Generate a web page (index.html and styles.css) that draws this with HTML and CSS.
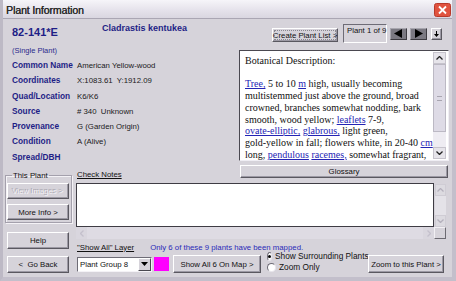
FILE: index.html
```html
<!DOCTYPE html>
<html>
<head>
    <title>Plant Information</title>
    <link rel="stylesheet" href="styles.css">
</head>
<body>
    <div class="window">
        <div class="titlebar">
            <span class="title">Plant Information</span>
            <div class="close">
                <svg width="17" height="14" viewBox="0 0 17 14">
                    <rect x="0.5" y="0.5" width="16" height="13" rx="2" fill="#e0533f" stroke="#b8392a"/>
                    <path d="M5 3.5 L12 10.5 M12 3.5 L5 10.5" stroke="#fff" stroke-width="1.8"/>
                </svg>
            </div>
        </div>

        <div class="client">
            <div class="top">
                <div class="info">
                    <div class="ident">
                        <div class="plant-id">82-141*E</div>
                        <div class="species">Cladrastis kentukea</div>
                    </div>
                    <div class="single">(Single Plant)</div>
                    <div class="fields">
                        <div class="field"><span class="label">Common Name</span><span class="value">American Yellow-wood</span></div>
                        <div class="field"><span class="label">Coordinates</span><span class="value">X:1083.61&nbsp; Y:1912.09</span></div>
                        <div class="field"><span class="label">Quad/Location</span><span class="value">K6/K6</span></div>
                        <div class="field"><span class="label">Source</span><span class="value"># 340&nbsp; Unknown</span></div>
                        <div class="field"><span class="label">Provenance</span><span class="value">G (Garden Origin)</span></div>
                        <div class="field"><span class="label">Condition</span><span class="value">A (Alive)</span></div>
                        <div class="field"><span class="label">Spread/DBH</span><span class="value"></span></div>
                    </div>
                </div>

                <div class="side">
                    <div class="navrow">
                        <div class="btn create-btn">Create Plant List &gt;</div>
                        <div class="counter">Plant 1 of 9</div>
                        <div class="arrow-btn">
                            <svg width="9" height="9" viewBox="0 0 9 9"><path d="M8 0 L0 4.5 L8 9 Z" fill="#000"/></svg>
                        </div>
                        <div class="arrow-btn">
                            <svg width="9" height="9" viewBox="0 0 9 9"><path d="M1 0 L9 4.5 L1 9 Z" fill="#000"/></svg>
                        </div>
                        <div class="btn down-btn">
                            <svg width="5" height="6" viewBox="0 0 5 6"><path d="M2 0 H3 V3 H5 L2.5 6 L0 3 H2 Z" fill="#000"/></svg>
                        </div>
                    </div>
                    <div class="desc">
                        <div class="desc-text">
                            Botanical Description:<br>
                            <br>
                            <a>Tree,</a> 5 to 10 <a>m</a> high, usually becoming<br>
                            multistemmed just above the ground, broad<br>
                            crowned, branches somewhat nodding, bark<br>
                            smooth, wood yellow; <a>leaflets</a> 7-9,<br>
                            <a>ovate-elliptic,</a> <a>glabrous,</a> light green,<br>
                            gold-yellow in fall; flowers white, in 20-40 <a>cm</a><br>
                            long, <a>pendulous</a> <a>racemes,</a> somewhat fragrant,
                        </div>
                        <div class="vscroll">
                            <div class="sb-btn"><svg width="7" height="4" viewBox="0 0 7 4"><path d="M0.5 3.5 L3.5 0.5 L6.5 3.5" fill="none" stroke="#222" stroke-width="1.3"/></svg></div>
                            <div class="sb-thumb"><span class="grip"></span></div>
                            <div class="sb-track"></div>
                            <div class="sb-btn"><svg width="7" height="4" viewBox="0 0 7 4"><path d="M0.5 0.5 L3.5 3.5 L6.5 0.5" fill="none" stroke="#222" stroke-width="1.3"/></svg></div>
                        </div>
                    </div>
                </div>
            </div>

            <div class="bottom">
                <div class="actions">
                    <fieldset class="group">
                        <legend>This Plant</legend>
                        <div class="btn side-btn disabled">View Images &gt;</div>
                        <div class="btn side-btn">More Info &gt;</div>
                    </fieldset>
                    <div class="btn side-btn help-btn">Help</div>
                    <div class="btn side-btn back-btn">&lt;&nbsp; Go Back</div>
                </div>

                <div class="notes">
                    <div class="notes-head">
                        <span class="link-label">Check Notes</span>
                        <div class="btn glossary-btn">Glossary</div>
                    </div>
                    <div class="notes-box">
                        <div class="notes-main">
                            <div class="notes-text"></div>
                            <div class="vscroll flat">
                                <div class="sb-btn dim"><svg width="7" height="4" viewBox="0 0 7 4"><path d="M0.5 3.5 L3.5 0.5 L6.5 3.5" fill="none" stroke="#b4b0bc" stroke-width="1.3"/></svg></div>
                                <div class="sb-track"></div>
                                <div class="sb-btn dim"><svg width="7" height="4" viewBox="0 0 7 4"><path d="M0.5 0.5 L3.5 3.5 L6.5 0.5" fill="none" stroke="#b4b0bc" stroke-width="1.3"/></svg></div>
                            </div>
                        </div>
                        <div class="hscroll">
                            <div class="hs-btn"><svg width="4" height="7" viewBox="0 0 4 7"><path d="M3.5 0.5 L0.5 3.5 L3.5 6.5" fill="none" stroke="#c4c0cc" stroke-width="1.3"/></svg></div>
                            <div class="hs-track"></div>
                            <div class="hs-btn"><svg width="4" height="7" viewBox="0 0 4 7"><path d="M0.5 0.5 L3.5 3.5 L0.5 6.5" fill="none" stroke="#c4c0cc" stroke-width="1.3"/></svg></div>
                            <div class="corner"></div>
                        </div>
                    </div>
                    <div class="layer-row">
                        <span class="link-label">"Show All" Layer</span>
                        <span class="mapped">Only 6 of these 9 plants have been mapped.</span>
                    </div>
                    <div class="controls">
                        <div class="select">
                            <span class="select-text">Plant Group 8</span>
                            <div class="select-btn">
                                <svg width="7" height="4" viewBox="0 0 7 4"><path d="M0 0 H7 L3.5 4 Z" fill="#000"/></svg>
                            </div>
                        </div>
                        <div class="swatch"></div>
                        <div class="btn map-btn">Show All 6 On Map &gt;</div>
                        <div class="radios">
                            <div class="radio-line"><span class="radio checked"></span>Show Surrounding Plants</div>
                            <div class="radio-line"><span class="radio"></span>Zoom Only</div>
                        </div>
                        <div class="btn zoom-btn">Zoom to this Plant &gt;</div>
                    </div>
                </div>
            </div>
        </div>
    </div>
</body>
</html>
```

FILE: styles.css
```css
body {
    margin: 0;
    font-family: "Liberation Sans", Arial, sans-serif;
    font-size: 7.8px;
    color: #111;
    background-color: #d6d3da;
    overflow: hidden;
}
.window {
    width: 456px;
    height: 281px;
    box-sizing: border-box;
    background-color: #d6d3da;
    border-left: 3px solid #bdb9c5;
    border-right: 4px solid #c3bfcb;
    border-bottom: 4px solid #c3bfcb;
    display: flex;
    flex-direction: column;
    overflow: hidden;
}
.titlebar {
    height: 18px;
    flex: none;
    display: flex;
    align-items: center;
    justify-content: space-between;
    padding: 0 1px 0 3px;
    background: linear-gradient(#f6f5f9, #e4e1ea 60%, #d9d6e0);
    border-bottom: 1px solid #aaa6b3;
}
.title {
    font-size: 10.5px;
    color: #2a2a2a;
    letter-spacing: -0.1px;
    text-shadow: 0.3px 0 0 #2a2a2a;
    margin-top: 1px;
}
.close {
    display: flex;
    margin-top: 2px;
}
.client {
    flex: 1;
    display: flex;
    flex-direction: column;
}
.top {
    display: flex;
    height: 146px;
}
.info {
    width: 227px;
    padding: 4px 0 0 9px;
}
.ident {
    display: flex;
}
.plant-id {
    width: 90px;
    margin-top: 3px;
    font-size: 11px;
    line-height: 13px;
    font-weight: bold;
    color: #1e1e86;
}
.species {
    font-size: 9px;
    line-height: 11px;
    font-weight: bold;
    color: #1e1e86;
}
.single {
    margin-top: 7px;
    font-size: 7.5px;
    line-height: 9px;
    color: #2a2a8c;
}
.fields {
    margin-top: 3px;
}
.field {
    display: flex;
    height: 15.3px;
    line-height: 15px;
}
.label {
    width: 65px;
    font-size: 8.3px;
    font-weight: bold;
    color: #1e1e86;
    white-space: nowrap;
}
.value {
    white-space: nowrap;
    color: #1a1a1a;
}
.side {
    width: 210px;
    padding-top: 5px;
}
.navrow {
    display: flex;
    justify-content: flex-end;
    align-items: center;
    height: 19px;
    padding-right: 7px;
}
.btn {
    box-sizing: border-box;
    display: flex;
    align-items: center;
    justify-content: center;
    background-color: #d6d3da;
    border: 1px solid;
    border-color: #ffffff #5a5860 #5a5860 #ffffff;
    box-shadow: inset -1px -1px 0 #9c99a4;
    white-space: nowrap;
    color: #111;
}
.create-btn {
    width: 66px;
    height: 14px;
    margin-top: 3px;
    outline: 1px dotted #8a8890;
    outline-offset: -3px;
}
.counter {
    box-sizing: border-box;
    width: 44px;
    height: 19px;
    margin-left: 5px;
    padding: 1px 0 0 3px;
    border: 1px solid;
    border-color: #6e6c76 #ffffff #ffffff #6e6c76;
    line-height: 9px;
    white-space: nowrap;
}
.arrow-btn {
    box-sizing: border-box;
    width: 17px;
    height: 12px;
    margin-left: 3px;
    display: flex;
    align-items: center;
    justify-content: center;
    background-color: #7b7982;
    border: 1px solid;
    border-color: #a8a6ae #3c3a40 #3c3a40 #a8a6ae;
}
.down-btn {
    width: 11px;
    height: 12px;
    margin-left: 4px;
}
.desc {
    margin-top: 7px;
    height: 111px;
    box-sizing: border-box;
    display: flex;
    background-color: #ffffff;
    border: 1px solid;
    border-color: #4a4850 #f0eef4 #f0eef4 #4a4850;
}
.desc-text {
    flex: 1;
    padding: 4px 0 0 5px;
    font-family: "Liberation Serif", "Times New Roman", serif;
    font-size: 10px;
    line-height: 11.7px;
    color: #111;
    white-space: nowrap;
    overflow: hidden;
}
.desc-text a {
    color: #2424b4;
    text-decoration: underline;
}
.vscroll {
    width: 13px;
    display: flex;
    flex-direction: column;
    background-color: #eeecf2;
    margin: 1px 2px 1px 0;
}
.sb-btn {
    box-sizing: border-box;
    height: 12px;
    display: flex;
    align-items: center;
    justify-content: center;
    background-color: #e6e4ea;
    border: 1px solid #c6c3cc;
}
.sb-thumb {
    box-sizing: border-box;
    height: 68px;
    display: flex;
    align-items: center;
    justify-content: center;
    background-color: #dedbe6;
    border: 1px solid #bcb9c4;
}
.grip {
    width: 5px;
    height: 3px;
    border-top: 1px solid #a8a5b0;
    border-bottom: 1px solid #a8a5b0;
}
.sb-track {
    flex: 1;
}
.bottom {
    display: flex;
    flex: 1;
}
.actions {
    width: 67px;
    margin-left: 2px;
    padding-top: 7px;
}
.group {
    box-sizing: border-box;
    height: 51px;
    margin: 0;
    padding: 0 0 0 1px;
    border: 1px solid #a4a0ac;
    box-shadow: 1px 1px 0 #f4f2f6, inset 1px 1px 0 #f4f2f6;
}
.group legend {
    padding: 0 1px;
    margin-left: 5px;
    line-height: 7px;
    color: #111;
}
.side-btn {
    width: 62px;
    height: 16px;
}
.group .side-btn {
    margin-top: 4px;
}
.group .side-btn + .side-btn {
    margin-top: 5px;
}
.disabled {
    color: #f2f0f4;
    text-shadow: -1px -1px 0 #a6a3ad;
}
.help-btn {
    margin: 9px 0 0 2px;
    height: 17px;
}
.back-btn {
    margin: 7px 0 0 2px;
    height: 17px;
}
.notes {
    width: 373px;
    margin-left: 4px;
}
.notes-head {
    display: flex;
    align-items: flex-end;
    justify-content: space-between;
    height: 14px;
}
.link-label {
    padding-left: 1px;
    text-decoration: underline;
    color: #111;
    white-space: nowrap;
}
.glossary-btn {
    width: 208px;
    height: 13px;
    margin-right: 1px;
    align-self: flex-start;
}
.notes-box {
    width: 370px;
    height: 56px;
    margin-top: 4px;
    display: flex;
    flex-direction: column;
}
.notes-main {
    display: flex;
    height: 44px;
}
.notes-text {
    flex: 1;
    background-color: #ffffff;
    border: 1px solid;
    border-color: #3e3c44 #3e3c44 #3e3c44 #3e3c44;
}
.vscroll.flat {
    margin: 1px 0 0 1px;
    width: 11px;
    background-color: #e4e2e8;
}
.sb-btn.dim {
    background-color: #dcdae0;
    border-color: #cfccd4;
}
.hscroll {
    display: flex;
    height: 12px;
    background-color: #dedbe3;
}
.hs-btn {
    width: 11px;
    display: flex;
    align-items: center;
    justify-content: center;
    background-color: #d9d6de;
}
.hs-track {
    flex: 1;
}
.corner {
    width: 12px;
    box-sizing: border-box;
    border: 1px solid;
    border-color: #f2f0f4 #6c6a72 #6c6a72 #f2f0f4;
    background-color: #d6d3da;
}
.layer-row {
    display: flex;
    height: 10px;
    margin-top: 4px;
    line-height: 10px;
}
.mapped {
    margin-left: 16px;
    color: #2a2ab8;
    white-space: nowrap;
}
.controls {
    display: flex;
    align-items: center;
    height: 18px;
    margin-top: 2px;
}
.select {
    box-sizing: border-box;
    width: 75px;
    height: 15px;
    margin-left: 1px;
    display: flex;
    align-items: center;
    background-color: #ffffff;
    border: 1px solid;
    border-color: #6e6c76 #f4f2f6 #f4f2f6 #6e6c76;
}
.select-text {
    flex: 1;
    padding-left: 2px;
    white-space: nowrap;
}
.select-btn {
    box-sizing: border-box;
    width: 13px;
    height: 13px;
    display: flex;
    align-items: center;
    justify-content: center;
    background-color: #d6d3da;
    border: 1px solid;
    border-color: #ffffff #4a4850 #4a4850 #ffffff;
}
.swatch {
    width: 15px;
    height: 14px;
    margin-left: 2px;
    background-color: #ff00ff;
}
.map-btn {
    width: 88px;
    height: 18px;
    margin-left: 4px;
}
.radios {
    margin-left: 6px;
    width: 98px;
    display: flex;
    flex-direction: column;
    margin-top: -5px;
}
.radio-line {
    display: flex;
    align-items: center;
    height: 11px;
    white-space: nowrap;
    font-size: 8.3px;
}
.radio {
    box-sizing: border-box;
    width: 9px;
    height: 9px;
    margin-right: 3px;
    border-radius: 50%;
    background-color: #ffffff;
    border: 1px solid;
    border-color: #6e6c76 #e8e6ec #e8e6ec #6e6c76;
    display: flex;
    align-items: center;
    justify-content: center;
}
.radio.checked::after {
    content: "";
    width: 3px;
    height: 3px;
    border-radius: 50%;
    background-color: #000;
}
.zoom-btn {
    width: 76px;
    height: 18px;
    margin-left: 3px;
}
```
